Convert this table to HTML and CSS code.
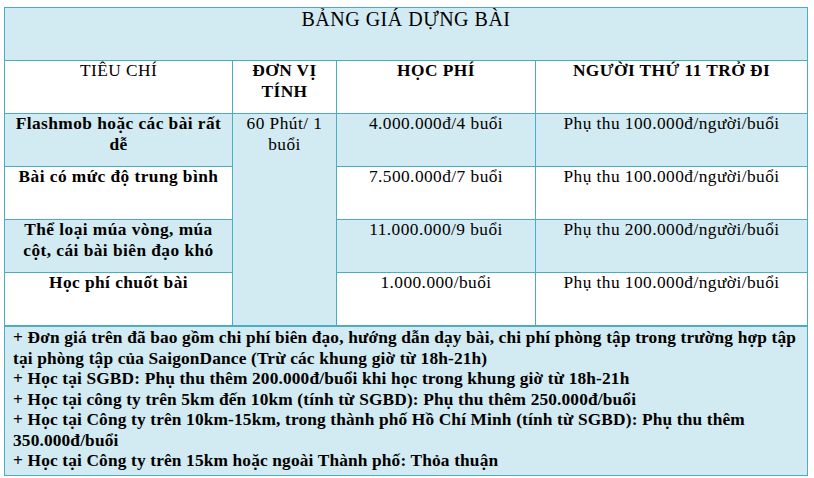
FILE: index.html
```html
<!DOCTYPE html>
<html lang="vi">
<head>
<meta charset="utf-8">
<title>Bảng giá dựng bài</title>
<link rel="stylesheet" href="styles.css">
</head>
<body>
<table class="price">
  <colgroup>
    <col class="c1">
    <col class="c2">
    <col class="c3">
    <col class="c4">
  </colgroup>
  <tr class="title-row shade">
    <td colspan="4" class="title">BẢNG GIÁ DỰNG BÀI</td>
  </tr>
  <tr class="row">
    <td>TIÊU CHÍ</td>
    <td class="b">ĐƠN VỊ TÍNH</td>
    <td class="b">HỌC PHÍ</td>
    <td class="b">NGƯỜI THỨ 11 TRỞ ĐI</td>
  </tr>
  <tr class="row shade">
    <td class="b">Flashmob hoặc các bài rất dễ</td>
    <td rowspan="4" class="unit">60 Phút/ 1 buổi</td>
    <td>4.000.000đ/4 buổi</td>
    <td>Phụ thu 100.000đ/người/buổi</td>
  </tr>
  <tr class="row">
    <td class="b">Bài có mức độ trung bình</td>
    <td>7.500.000đ/7 buổi</td>
    <td>Phụ thu 100.000đ/người/buổi</td>
  </tr>
  <tr class="row shade">
    <td class="b">Thể loại múa vòng, múa cột, cái bài biên đạo khó</td>
    <td>11.000.000/9 buổi</td>
    <td>Phụ thu 200.000đ/người/buổi</td>
  </tr>
  <tr class="row">
    <td class="b">Học phí chuốt bài</td>
    <td>1.000.000/buổi</td>
    <td>Phụ thu 100.000đ/người/buổi</td>
  </tr>
  <tr class="shade">
    <td colspan="4" class="notes">
      <p>+ Đơn giá trên đã bao gồm chi phí biên đạo, hướng dẫn dạy bài, chi phí phòng tập trong trường hợp tập tại phòng tập của SaigonDance (Trừ các khung giờ từ 18h-21h)</p>
      <p>+ Học tại SGBD: Phụ thu thêm 200.000đ/buổi khi học trong khung giờ từ 18h-21h</p>
      <p>+ Học tại công ty trên 5km đến 10km (tính từ SGBD): Phụ thu thêm 250.000đ/buổi</p>
      <p>+ Học tại Công ty trên 10km-15km, trong thành phố Hồ Chí Minh (tính từ SGBD): Phụ thu thêm 350.000đ/buổi</p>
      <p>+ Học tại Công ty trên 15km hoặc ngoài Thành phố: Thỏa thuận</p>
    </td>
  </tr>
</table>
</body>
</html>
```

FILE: styles.css
```css
html, body {
  margin: 0;
  padding: 0;
  background: #ffffff;
}

body {
  padding: 7px 0 0 4px;
  font-family: "Liberation Serif", "Times New Roman", serif;
  color: #000000;
}

.price {
  border-collapse: collapse;
  table-layout: fixed;
  width: 803px;
  font-size: 17.33px;
  line-height: 20.5px;
  letter-spacing: 0.45px;
}

.c1 { width: 228px; }
.c2 { width: 104px; }
.c3 { width: 199px; }
.c4 { width: 272px; }

.price td {
  border: 1px solid #4bacc6;
  padding: 0 6px;
  vertical-align: top;
  text-align: center;
}

.shade td {
  background: #d2eaf1;
}

.unit {
  background: #d2eaf1;
}

.row td {
  height: 52px;
}

.title-row td {
  height: 52px;
}

.title {
  font-size: 20px;
  line-height: 23px;
  letter-spacing: 0.5px;
}

.b {
  font-weight: bold;
}

.price td.notes {
  text-align: left;
  font-weight: bold;
  letter-spacing: 0.15px;
  padding: 1px 7px 3px 8px;
  border-top-width: 2px;
}

.notes p {
  margin: 0;
}
```
